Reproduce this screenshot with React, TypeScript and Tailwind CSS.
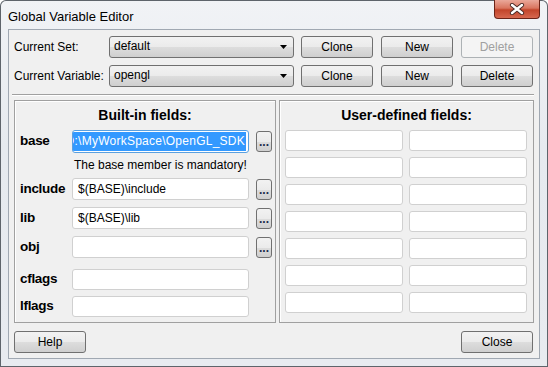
import React from "react";

const FONT = { fontFamily: '"Liberation Sans", Arial, sans-serif' };

function Btn({ label, w, disabled }: { label: string; w: string; disabled?: boolean }) {
  return (
    <div
      className={
        "flex h-[22px] items-center justify-center rounded-[3px] border text-[12px] " +
        w +
        (disabled
          ? " border-[#adb2b5] bg-[#f4f4f4] text-[#a0a0a0]"
          : " border-[#707070] bg-[linear-gradient(#f2f2f2_0%,#ebebeb_50%,#dddddd_51%,#cfcfcf_100%)] text-black")
      }
    >
      {label}
    </div>
  );
}

function Dots() {
  return (
    <div className="flex h-[21px] w-[16px] items-end justify-center rounded-[3px] border border-[#707070] bg-[linear-gradient(#f2f2f2_0%,#ebebeb_50%,#dddddd_51%,#cfcfcf_100%)] pb-[3px] text-[12px] leading-[12px] font-bold text-[#1a2a4a]">
      ...
    </div>
  );
}

function Combo({ value }: { value: string }) {
  return (
    <div className="flex h-[22px] w-[185px] items-center justify-between rounded-[3px] border border-[#707070] bg-[linear-gradient(#f2f2f2_0%,#ebebeb_50%,#dddddd_51%,#cfcfcf_100%)] pl-[4px] pr-[6px] text-[12px] text-black">
      <span className="-mt-[3px]">{value}</span>
      <svg width="7" height="4" viewBox="0 0 7 4">
        <path d="M0 0 H7 L3.5 4 Z" fill="#000" />
      </svg>
    </div>
  );
}

function Field({ w, h = "h-[22px]", value }: { w: string; h?: string; value?: string }) {
  return (
    <div
      className={
        "flex items-center overflow-hidden rounded-[3px] border border-[#d0d0d0] bg-white pl-[5px] text-[12px] text-black " +
        w +
        " " +
        h
      }
    >
      {value ? <span className="whitespace-nowrap">{value}</span> : null}
    </div>
  );
}

function Label({ text }: { text: string }) {
  return <div className="w-[57px] shrink-0 pl-[5px] text-[13.5px] font-bold tracking-[-0.3px] text-black">{text}</div>;
}

export default function App() {
  return (
    <div
      style={FONT}
      className="flex h-[367px] w-[548px] flex-col overflow-hidden rounded-t-[6px] bg-[linear-gradient(#f1f3f6,#e6eaef_40%,#e8ebf0)] shadow-[inset_0_0_0_1px_#5e646b]"
    >
      {/* title bar */}
      <div className="flex h-[29px] shrink-0 items-start justify-between">
        <div className="mt-[7px] pl-[8px] text-[13px] text-black">Global Variable Editor</div>
        <div className="mr-[8px] flex h-[19px] w-[46px] items-center justify-center rounded-b-[4px] border border-t-0 border-[#6b2418] bg-[linear-gradient(#eaa89a,#d9755f_45%,#c2452b_55%,#d6684f)]">
          <svg width="16" height="12" viewBox="0 0 16 12">
            <path d="M3 2 L13 10 M13 2 L3 10" stroke="#4a2a26" strokeWidth="4.2" strokeLinecap="round" />
            <path d="M3 2 L13 10 M13 2 L3 10" stroke="#fff" strokeWidth="2.4" strokeLinecap="round" />
          </svg>
        </div>
      </div>

      <div className="flex h-[330px] shrink-0">
        <div className="w-[8px] shrink-0" />
        {/* client */}
        <div className="flex h-[330px] w-[532px] shrink-0 flex-col border border-[#a0a8b2] bg-[#f0f0f0] text-black">
          {/* row 1 */}
          <div className="mt-[6px] flex items-center pl-[5px]">
            <div className="w-[95px] text-[12px]">Current Set:</div>
            <Combo value="default" />
            <div className="ml-[7px] flex gap-[8px]">
              <Btn label="Clone" w="w-[72px]" />
              <Btn label="New" w="w-[72px]" />
              <Btn label="Delete" w="w-[72px]" disabled />
            </div>
          </div>
          {/* row 2 */}
          <div className="mt-[7px] flex items-center pl-[5px]">
            <div className="w-[95px] text-[12px]">Current Variable:</div>
            <Combo value="opengl" />
            <div className="ml-[7px] flex gap-[8px]">
              <Btn label="Clone" w="w-[72px]" />
              <Btn label="New" w="w-[72px]" />
              <Btn label="Delete" w="w-[72px]" />
            </div>
          </div>
          {/* separator */}
          <div className="ml-[3px] mt-[7px] h-[2px] w-[522px] border-t border-b border-t-[#a0a0a0] border-b-white" />

          {/* panels */}
          <div className="mt-[4px] flex h-[223px] pl-[5px]">
            {/* left panel */}
            <div className="flex h-[223px] w-[262px] flex-col border border-[#a0a0a0] shadow-[inset_1px_1px_0_#ffffff]">
              <div className="mt-[6px] text-center text-[14px] font-bold leading-[17px]">Built-in fields:</div>
              <div className="mt-[6px] flex h-[22px] items-center">
                <Label text="base" />
                <div className="flex h-[23px] w-[177px] items-stretch justify-end overflow-hidden rounded-[3px] border border-[#5aa0e0] bg-white p-[1px] pr-[2px] text-[12px]">
                  <span className="flex items-center whitespace-nowrap bg-[#3399ff] pr-[1px] tracking-[0.25px] text-white">
                    D:\MyWorkSpace\OpenGL_SDK
                  </span>
                </div>
                <div className="ml-[7px]">
                  <Dots />
                </div>
              </div>
              <div className="mt-[6px] h-[14px] pl-[59px] text-[12px] leading-[14px]">
                The base member is mandatory!
              </div>
              <div className="mt-[6px] flex h-[22px] items-center">
                <Label text="include" />
                <Field w="w-[177px]" value="$(BASE)\include" />
                <div className="ml-[7px]">
                  <Dots />
                </div>
              </div>
              <div className="mt-[7px] flex h-[22px] items-center">
                <Label text="lib" />
                <Field w="w-[177px]" value="$(BASE)\lib" />
                <div className="ml-[7px]">
                  <Dots />
                </div>
              </div>
              <div className="mt-[7px] flex h-[22px] items-center">
                <Label text="obj" />
                <Field w="w-[177px]" />
                <div className="ml-[7px]">
                  <Dots />
                </div>
              </div>
              <div className="mt-[11px] flex h-[21px] items-center">
                <Label text="cflags" />
                <Field w="w-[177px]" h="h-[21px]" />
              </div>
              <div className="mt-[6px] flex h-[21px] items-center">
                <Label text="lflags" />
                <Field w="w-[177px]" h="h-[21px]" />
              </div>
            </div>

            {/* right panel */}
            <div className="ml-[3px] flex h-[223px] w-[255px] flex-col border border-[#a0a0a0] shadow-[inset_1px_1px_0_#ffffff]">
              <div className="mt-[6px] text-center text-[14px] font-bold leading-[17px]">User-defined fields:</div>
              <div className="ml-[5px] mt-[6px] grid grid-cols-[118px_118px] gap-x-[6px] gap-y-[6px]">
                {Array.from({ length: 14 }).map((_, i) => (
                  <Field key={i} w="w-[118px]" h="h-[21px]" />
                ))}
              </div>
            </div>
          </div>

          {/* bottom buttons */}
          <div className="mt-[8px] flex justify-between pl-[5px] pr-[6px]">
            <Btn label="Help" w="w-[72px]" />
            <Btn label="Close" w="w-[72px]" />
          </div>
        </div>
        <div className="w-[8px] shrink-0" />
      </div>
    </div>
  );
}
